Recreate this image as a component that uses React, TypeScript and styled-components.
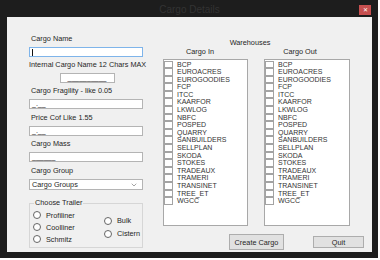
import React, { FC } from 'react'
import styled, { createGlobalStyle } from 'styled-components'
import { ChevronDown } from 'lucide-react'

const GlobalStyle = createGlobalStyle`
  * {
    box-sizing: border-box;
  }
  html, body {
    margin: 0;
    padding: 0;
    background: #ffffff;
  }
  body {
    font-family: 'Liberation Sans', Arial, sans-serif;
    font-size: 7.3px;
  }
`

const warehouses = [
  'BCP',
  'EUROACRES',
  'EUROGOODIES',
  'FCP',
  'ITCC',
  'KAARFOR',
  'LKWLOG',
  'NBFC',
  'POSPED',
  'QUARRY',
  'SANBUILDERS',
  'SELLPLAN',
  'SKODA',
  'STOKES',
  'TRADEAUX',
  'TRAMERI',
  'TRANSINET',
  'TREE_ET',
  'WGCC',
]

const Frame = styled.div`
  width: 378px;
  height: 258px;
  background: #1d1d1d;
  padding: 0 6px 6px 7px;
  display: flex;
  flex-direction: column;
`

const TitleBar = styled.div`
  position: relative;
  height: 17px;
  display: flex;
  align-items: center;
  justify-content: center;
  padding-top: 2px;
  font-size: 10px;
  color: #333333;
`

const CloseButton = styled.div`
  position: absolute;
  top: 5px;
  right: 1px;
  width: 12px;
  height: 10px;
  background: #c75050;
  color: #ffffff;
  font-size: 6px;
  line-height: 10px;
  text-align: center;
`

const Body = styled.div`
  flex: 1;
  background: #f0f0f0;
  display: flex;
`

const LeftCol = styled.div`
  width: 114px;
  margin-left: 22px;
  padding-top: 17px;
  display: flex;
  flex-direction: column;
`

const Label = styled.div<{ $top?: number; $center?: boolean }>`
  margin-top: ${({ $top = 0 }) => $top}px;
  margin-bottom: 3px;
  padding-left: ${({ $center }) => ($center ? 0 : 2)}px;
  text-align: ${({ $center }) => ($center ? 'center' : 'left')};
  font-size: 7.3px;
  line-height: 10px;
  color: #262626;
  white-space: nowrap;
`

const TextBox = styled.div<{ $focused?: boolean; $small?: boolean }>`
  height: 10px;
  width: ${({ $small }) => ($small ? '55px' : '100%')};
  align-self: ${({ $small }) => ($small ? 'center' : 'stretch')};
  margin-left: ${({ $small }) => ($small ? '2px' : '0')};
  background: #ffffff;
  border: 1px solid ${({ $focused }) => ($focused ? '#7eb4ea' : '#b4b4b4')};
  padding: 0 2px;
  display: flex;
  align-items: center;
  justify-content: ${({ $small }) => ($small ? 'center' : 'flex-start')};
  font-size: 7px;
  line-height: 8px;
  color: #222;
  overflow: hidden;
`

const Caret = styled.span`
  width: 1px;
  height: 7px;
  background: #111;
`

const Select = styled.div`
  height: 11px;
  background: #ffffff;
  border: 1px solid #b4b4b4;
  padding: 0 4px 0 2px;
  display: flex;
  align-items: center;
  justify-content: space-between;
  font-size: 7.3px;
  color: #262626;
`

const GroupBox = styled.div`
  margin-top: 13px;
  height: 45px;
  border: 1px solid #d6d6d6;
  padding: 0 3px;
  display: flex;
  flex-direction: column;
`

const GroupTitle = styled.div`
  width: fit-content;
  margin-top: -6px;
  margin-left: 1px;
  padding: 0 1px;
  background: #f0f0f0;
  font-size: 7.3px;
  line-height: 10px;
  color: #262626;
`

const RadioGrid = styled.div`
  display: grid;
  grid-template-columns: 71px auto;
  margin-top: 1px;
`

const RadioColumn = styled.div<{ $offset?: number; $row: number }>`
  display: grid;
  grid-auto-rows: ${({ $row }) => $row}px;
  margin-top: ${({ $offset = 0 }) => $offset}px;
`

const RadioRow = styled.div`
  display: flex;
  align-items: center;
  gap: 5px;
  font-size: 7.3px;
  line-height: 9px;
  color: #262626;
`

const RadioCircle = styled.span`
  width: 8px;
  height: 8px;
  border-radius: 50%;
  border: 1px solid #666666;
  background: #ffffff;
`

const RightCol = styled.div`
  width: 209px;
  margin-left: 20px;
  padding-top: 21px;
  display: flex;
  flex-direction: column;
`

const Heading = styled.div`
  width: 174px;
  text-align: center;
  font-size: 7.3px;
  line-height: 9px;
  color: #262626;
`

const Lists = styled.div`
  display: flex;
  gap: 16px;
`

const ListColumn = styled.div<{ $width: number }>`
  width: ${({ $width }) => $width}px;
  display: flex;
  flex-direction: column;
`

const ListLabel = styled.div<{ $shift: number }>`
  padding-right: ${({ $shift }) => $shift}px;
  margin-bottom: 3px;
  text-align: center;
  font-size: 7.3px;
  line-height: 9px;
  color: #262626;
`

const ListBox = styled.div`
  height: 167px;
  background: #ffffff;
  border: 1px solid #a8a8a8;
  padding-top: 0.5px;
`

const ListItem = styled.div`
  height: 7.6px;
  display: flex;
  align-items: center;
  gap: 4px;
  font-size: 7px;
  line-height: 7.6px;
  color: #333333;
  white-space: nowrap;
`

const CheckBox = styled.span`
  width: 9px;
  height: 7.6px;
  border: 1px solid #a3a3a3;
  background: #ffffff;
  flex-shrink: 0;
`

const ButtonRow = styled.div`
  display: flex;
  align-items: center;
  gap: 29px;
  margin-top: 8px;
  padding-left: 66px;
`

const Button = styled.div<{ $width: number; $height: number }>`
  width: ${({ $width }) => $width}px;
  height: ${({ $height }) => $height}px;
  background: #e1e1e1;
  border: 1px solid #adadad;
  display: flex;
  align-items: center;
  justify-content: center;
  font-size: 7.3px;
  color: #262626;
`

const WarehouseList: FC<{ title: string; width: number; shift: number }> = ({ title, width, shift }) => (
  <ListColumn $width={width}>
    <ListLabel $shift={shift}>{title}</ListLabel>
    <ListBox>
      {warehouses.map((name) => (
        <ListItem key={name}>
          <CheckBox />
          {name}
        </ListItem>
      ))}
    </ListBox>
  </ListColumn>
)

const Radio: FC<{ label: string }> = ({ label }) => (
  <RadioRow>
    <RadioCircle />
    {label}
  </RadioRow>
)

export default function App() {
  return (
    <>
      <GlobalStyle />
      <Frame>
        <TitleBar>
          Cargo Details
          <CloseButton>✕</CloseButton>
        </TitleBar>
        <Body>
          <LeftCol>
            <Label>Cargo Name</Label>
            <TextBox $focused>
              <Caret />
            </TextBox>
            <Label $top={3} $center>
              Internal Cargo Name 12 Chars MAX
            </Label>
            <TextBox $small>__________</TextBox>
            <Label $top={3}>Cargo Fragility - like 0.05</Label>
            <TextBox>_.__</TextBox>
            <Label $top={4}>Price Cof Like 1.55</Label>
            <TextBox>_.__</TextBox>
            <Label $top={3}>Cargo Mass</Label>
            <TextBox>______</TextBox>
            <Label $top={4}>Cargo Group</Label>
            <Select>
              Cargo Groups
              <ChevronDown size={8} strokeWidth={1.6} color="#555" />
            </Select>
            <GroupBox>
              <GroupTitle>Choose Trailer</GroupTitle>
              <RadioGrid>
                <RadioColumn $row={12}>
                  <Radio label="Profiliner" />
                  <Radio label="Coolliner" />
                  <Radio label="Schmitz" />
                </RadioColumn>
                <RadioColumn $row={13} $offset={5}>
                  <Radio label="Bulk" />
                  <Radio label="Cistern" />
                </RadioColumn>
              </RadioGrid>
            </GroupBox>
          </LeftCol>
          <RightCol>
            <Heading>Warehouses</Heading>
            <Lists>
              <WarehouseList title="Cargo In" width={85} shift={11} />
              <WarehouseList title="Cargo Out" width={86} shift={14} />
            </Lists>
            <ButtonRow>
              <Button $width={55} $height={16}>
                Create Cargo
              </Button>
              <Button $width={51} $height={12}>
                Quit
              </Button>
            </ButtonRow>
          </RightCol>
        </Body>
      </Frame>
    </>
  )
}
